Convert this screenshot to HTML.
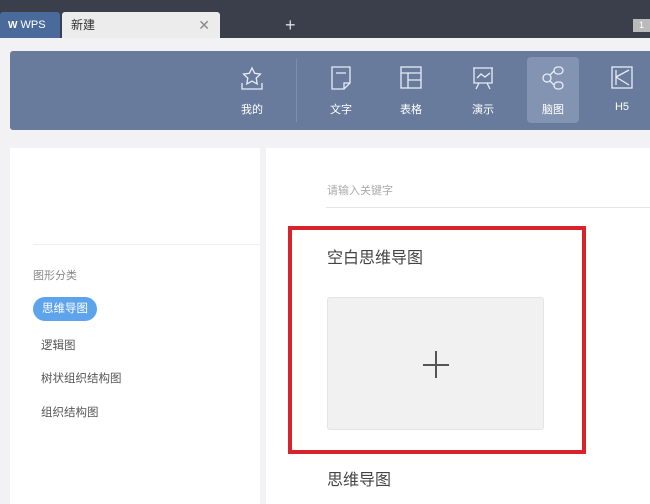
<!DOCTYPE html>
<html><head><meta charset="utf-8"><style>
*{margin:0;padding:0;box-sizing:border-box}
body{width:650px;height:504px;overflow:hidden;background:#f2f2f4;font-family:"Liberation Sans","Noto Sans CJK SC",sans-serif;position:relative}
.abs{position:absolute}
.top{left:0;top:0;width:650px;height:38px;background:#3b3e4b}
.wps{left:0;top:12px;width:60px;height:26px;background:#4a6a9c;border-radius:3px 3px 0 0;color:#fff;font-size:11px;line-height:26px;padding-left:8px}
.tab{left:62px;top:12px;width:158px;height:26px;background:#ececec;border-radius:3px 3px 0 0;font-size:12px;line-height:26px;padding-left:9px;color:#333}
.tab .x{position:absolute;right:10px;top:0;color:#888;font-size:14px}
.plus{left:285px;top:12px;color:#ddd;font-size:18px;line-height:26px}
.badge{left:633px;top:19px;width:17px;height:13px;background:#bbb;color:#fff;font-size:9px;line-height:13px;text-align:center}
.bar{left:10px;top:51px;width:640px;height:79px;background:#697b9c;border-radius:3px 0 0 3px}
.it{position:absolute;top:0;width:52px;height:79px;color:#fff;font-size:11px;text-align:center}
.it svg{position:absolute;left:14px;top:14px}
.it span{position:absolute;left:0;right:0;top:50px}
.sel{background:#8294b2;border-radius:4px;top:6px !important;height:66px}
.left{left:10px;top:148px;width:250px;height:356px;background:#fff}
.right{left:266px;top:148px;width:384px;height:356px;background:#fff}
</style></head><body>
<div class="abs top"></div>
<div class="abs wps"><b style="font-size:10px">W</b> WPS</div>
<div class="abs tab">新建<span class="x">✕</span></div>
<div class="abs plus">+</div>
<div class="abs badge">1</div>
<div class="abs bar">
 <div class="abs" style="left:286px;top:8px;width:1px;height:63px;background:#7d8eab"></div>
 <div class="it" style="left:216px"><svg width="24" height="26" viewBox="0 0 24 26" fill="none" stroke="#e8edf5" stroke-width="1.3"><path d="M12 3l2.6 5.3 5.8.8-4.2 4 1 5.8-5.2-2.8-5.2 2.8 1-5.8-4.2-4 5.8-.8z"/><path d="M2 18v6h20v-6"/></svg><span>我的</span></div>
 <div class="it" style="left:305px"><svg width="24" height="26" viewBox="0 0 24 26" fill="none" stroke="#e8edf5" stroke-width="1.3"><path d="M3 2h18v16l-6 6H3z"/><path d="M7 8h10M15 24v-6h6"/></svg><span>文字</span></div>
 <div class="it" style="left:375px"><svg width="24" height="26" viewBox="0 0 24 26" fill="none" stroke="#e8edf5" stroke-width="1.3"><rect x="2" y="2" width="20" height="21"/><path d="M2 8h20M9 8v15M9 15h13"/></svg><span>表格</span></div>
 <div class="it" style="left:447px"><svg width="24" height="26" viewBox="0 0 24 26" fill="none" stroke="#e8edf5" stroke-width="1.3"><path d="M2 3h20M3 3v15h18V3M6 13l4-4 4 3 5-4M8 18l-3 6M16 18l3 6"/></svg><span>演示</span></div>
 <div class="it sel" style="left:517px"><svg width="24" height="26" viewBox="0 0 24 26" fill="none" stroke="#e8edf5" stroke-width="1.3" style="top:8px"><circle cx="6" cy="13" r="4"/><rect x="13" y="2" width="9" height="7" rx="3.5"/><rect x="13" y="17" width="9" height="7" rx="3.5"/><path d="M9 10l4-4M9 16l4 4"/></svg><span style="top:44px">脑图</span></div>
 <div class="it" style="left:586px"><svg width="24" height="26" viewBox="0 0 24 26" fill="none" stroke="#e8edf5" stroke-width="1.3"><rect x="2" y="2" width="20" height="21"/><path d="M6 5v15M6 12l13-7M6 12l13 8"/></svg><span>H5</span></div>
</div>
<div class="abs left">
 <div class="abs" style="left:23px;top:96px;width:227px;height:1px;background:#eee"></div>
 <div class="abs" style="left:23px;top:119px;font-size:11px;color:#888">图形分类</div>
 <div class="abs" style="left:23px;top:149px;width:64px;height:24px;border-radius:12px;background:#5ea4ec;color:#fff;font-size:11.5px;line-height:24px;text-align:center">思维导图</div>
 <div class="abs" style="left:31px;top:189px;font-size:11.5px;color:#555">逻辑图</div>
 <div class="abs" style="left:31px;top:222px;font-size:11.5px;color:#555">树状组织结构图</div>
 <div class="abs" style="left:31px;top:256px;font-size:11.5px;color:#555">组织结构图</div>
</div>
<div class="abs right">
 <div class="abs" style="left:61px;top:34px;font-size:11px;color:#aaa">请输入关键字</div>
 <div class="abs" style="left:60px;top:59px;width:324px;height:1px;background:#e6e6e6"></div>
 <div class="abs" style="left:61px;top:96px;font-size:16px;color:#444">空白思维导图</div>
 <div class="abs" style="left:61px;top:149px;width:217px;height:133px;background:#f1f1f1;border:1px solid #e4e4e4;border-radius:3px"></div>
 <div class="abs" style="left:157px;top:216px;width:26px;height:1.5px;background:#555"></div>
 <div class="abs" style="left:169px;top:203px;width:1.5px;height:27px;background:#555"></div>
 <div class="abs" style="left:61px;top:318px;font-size:16px;color:#444">思维导图</div>
</div>
<div class="abs" style="left:288px;top:226px;width:298px;height:228px;border:4px solid #d8222c"></div>
</body></html>
